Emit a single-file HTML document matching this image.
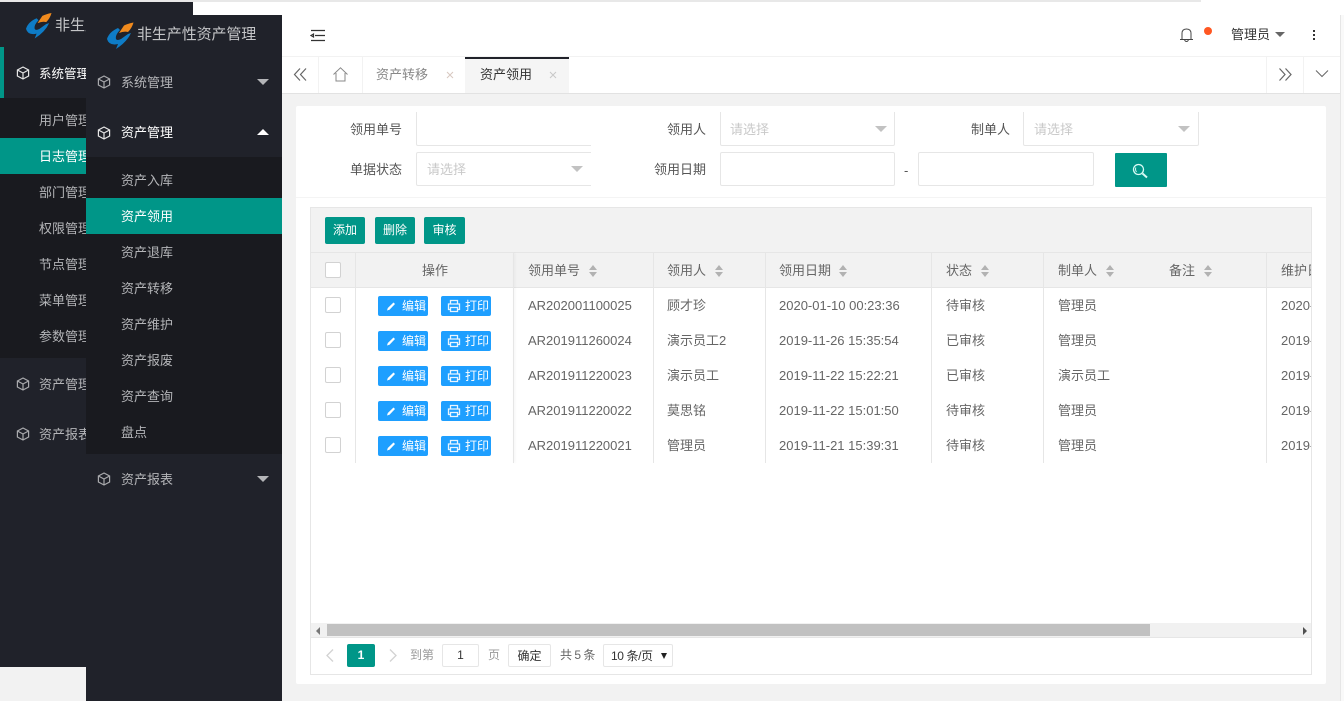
<!DOCTYPE html>
<html lang="zh-CN">
<head>
<meta charset="utf-8">
<title>资产领用</title>
<style>
html,body{margin:0;padding:0;width:1344px;height:701px;overflow:hidden;background:#fff;}
body{position:relative;font-family:"Liberation Sans","WenQuanYi Zen Hei","Noto Sans CJK SC",sans-serif;font-size:13px;color:#666;}
div,span,svg{position:absolute;box-sizing:border-box;}
.t{white-space:nowrap;line-height:18px;height:18px;margin-top:1px;}
.s{color:#b4b5b8;}
.w{color:#fff;}
.lbl{color:#555;width:90px;text-align:right;}
.ipt{background:#fff;border:1px solid #e6e6e6;border-radius:2px;}
.ph{color:#c9c9c9;}
.car{width:0;height:0;border-left:6px solid transparent;border-right:6px solid transparent;border-top:6px solid #c2c2c2;}
.carw{width:0;height:0;border-left:6px solid transparent;border-right:6px solid transparent;border-top:6px solid #b4b5b8;}
.g{background:#009688;color:#fff;border-radius:2px;text-align:center;font-size:12px;line-height:27px;height:27px;}
.vl{top:253px;height:210px;width:1px;background:#e6e6e6;}
.cb{left:325px;width:16px;height:16px;border:1px solid #d2d2d2;border-radius:2px;background:#fff;}
.b{background:#1e9fff;color:#fff;border-radius:2px;height:20px;width:50px;font-size:12px;line-height:20px;}
.b span{left:24px;top:0;white-space:nowrap;}
.b svg{left:6px;top:3px;}
.up{width:0;height:0;border-left:4px solid transparent;border-right:4px solid transparent;border-bottom:5px solid #b2b2b2;}
.dn{width:0;height:0;border-left:4px solid transparent;border-right:4px solid transparent;border-top:5px solid #b2b2b2;}
.h{color:#666;}
.clip{width:30px;height:20px;overflow:hidden;}
</style>
</head>
<body>
<svg width="0" height="0" style="left:0;top:0">
<defs>
<symbol id="cube" viewBox="0 0 14 14"><path d="M7 1 L12.6 4 V10 L7 13 L1.4 10 V4 Z M1.4 4 L7 7 L12.6 4 M7 7 V13" fill="none" stroke="currentColor" stroke-width="1.2"/></symbol>
<symbol id="logo" viewBox="0 0 27 27"><path d="M0 17 Q2 10 11 6 L13 8 Q8 13 9 17 Q10 19 14 17 L21 12 L24 11 Q20 20 9 27 L11 22 Q2 24 0 17Z" fill="#0e7cc6"/><path d="M12 11 L17 3.5 Q21 1.500 26.500 .5 Q25 6 21 10 Q17 9 12 11Z" fill="#f08a1d"/></symbol>
<symbol id="pen" viewBox="0 0 14 14"><path d="M3 11.500 L3.800 9 L9.500 3.500 L11 5 L5.500 10.700Z" fill="#fff"/></symbol>
<symbol id="prn" viewBox="0 0 14 14"><path d="M3.500 4.500 V1.500 H10.500 V4.500 M3.500 10.500 H1.500 V5 H12.500 V10.500 H10.500 M3.500 8.500 H10.500 V12.500 H3.500Z" fill="none" stroke="#e8f4ff" stroke-width="1.300"/></symbol>
</defs>
</svg>

<div style="left:0;top:0;width:1201px;height:2px;background:#e8e8e8"></div>
<div style="left:0;top:15px;width:1344px;height:686px;background:#f2f2f2"></div>
<div style="left:1340px;top:15px;width:4px;height:686px;background:#f9f9f9;border-left:1px solid #e6e6e6"></div>

<!-- back sidebar -->
<div style="left:0;top:2px;width:193px;height:665px;background:#20222a"></div>
<svg style="left:26px;top:12px" width="26" height="27"><use href="#logo"/></svg>
<div class="t" style="left:55px;top:16px;font-size:15px;color:#c4c5c7">非生产性资产管理</div>
<div style="left:0;top:47px;width:4px;height:51px;background:#009688"></div>
<svg style="left:16px;top:66px;color:#e6e6e6" width="14" height="14"><use href="#cube"/></svg>
<div class="t w" style="left:39px;top:64px;font-size:12.500px">系统管理</div>
<div style="left:0;top:98px;width:193px;height:260px;background:#191a1f"></div>
<div style="left:0;top:138px;width:193px;height:36px;background:#009688"></div>
<div class="t s" style="left:39px;top:111px">用户管理</div>
<div class="t w" style="left:39px;top:147px">日志管理</div>
<div class="t s" style="left:39px;top:183px">部门管理</div>
<div class="t s" style="left:39px;top:219px">权限管理</div>
<div class="t s" style="left:39px;top:255px">节点管理</div>
<div class="t s" style="left:39px;top:291px">菜单管理</div>
<div class="t s" style="left:39px;top:327px">参数管理</div>
<svg style="left:16px;top:377px;color:#a9aaad" width="14" height="14"><use href="#cube"/></svg>
<div class="t s" style="left:39px;top:375px">资产管理</div>
<svg style="left:16px;top:427px;color:#a9aaad" width="14" height="14"><use href="#cube"/></svg>
<div class="t s" style="left:39px;top:425px">资产报表</div>

<!-- front sidebar -->
<div style="left:86px;top:15px;width:196px;height:686px;background:#20222a"></div>
<svg style="left:107px;top:22px" width="27" height="27"><use href="#logo"/></svg>
<div class="t" style="left:137px;top:25px;font-size:15px;color:#c4c5c7;letter-spacing:-.1px">非生产性资产管理</div>
<svg style="left:97px;top:75px;color:#a9aaad" width="14" height="14"><use href="#cube"/></svg>
<div class="t s" style="left:121px;top:73px">系统管理</div>
<div class="carw" style="left:257px;top:79px"></div>
<svg style="left:97px;top:126px;color:#e6e6e6" width="14" height="14"><use href="#cube"/></svg>
<div class="t w" style="left:121px;top:123px">资产管理</div>
<div style="left:257px;top:129px;width:0;height:0;border-left:6px solid transparent;border-right:6px solid transparent;border-bottom:6px solid #fff"></div>
<div style="left:86px;top:157px;width:196px;height:297px;background:#191a1f"></div>
<div style="left:86px;top:198px;width:196px;height:36px;background:#009688"></div>
<div class="t s" style="left:121px;top:171px">资产入库</div>
<div class="t w" style="left:121px;top:207px">资产领用</div>
<div class="t s" style="left:121px;top:243px">资产退库</div>
<div class="t s" style="left:121px;top:279px">资产转移</div>
<div class="t s" style="left:121px;top:315px">资产维护</div>
<div class="t s" style="left:121px;top:351px">资产报废</div>
<div class="t s" style="left:121px;top:387px">资产查询</div>
<div class="t s" style="left:121px;top:423px">盘点</div>
<svg style="left:97px;top:472px;color:#a9aaad" width="14" height="14"><use href="#cube"/></svg>
<div class="t s" style="left:121px;top:470px">资产报表</div>
<div class="carw" style="left:257px;top:476px"></div>

<!-- header -->
<div style="left:282px;top:15px;width:1058px;height:42px;background:#fff;border-bottom:1px solid #f2f2f2"></div>
<svg style="left:310px;top:29px" width="16" height="13"><path d="M1 1.500H15M5 6.500H15M1 11.500H15M1 6.500L3.500 5V8Z" stroke="#333" stroke-width="1.200" fill="none"/></svg>
<svg style="left:1179px;top:27px" width="15" height="15"><path d="M1 12.500H14M3 12.500V6.500Q3 2 7.500 2Q12 2 12 6.500V12.500M5.500 12.500Q6 14.500 7.500 14.500Q9 14.500 9.500 12.500" fill="none" stroke="#444" stroke-width="1"/></svg>
<div style="left:1204px;top:27px;width:8px;height:8px;border-radius:50%;background:#ff5722"></div>
<div class="t" style="left:1231px;top:25px;font-size:13px;color:#333">管理员</div>
<div style="left:1275px;top:32px;width:0;height:0;border-left:5.500px solid transparent;border-right:5.500px solid transparent;border-top:5px solid #666"></div>
<div style="left:1313px;top:30px;width:2px;height:2px;background:#333"></div>
<div style="left:1313px;top:34px;width:2px;height:2px;background:#333"></div>
<div style="left:1313px;top:38px;width:2px;height:2px;background:#333"></div>

<!-- tabs -->
<div style="left:282px;top:57px;width:1058px;height:37px;background:#fff;border-bottom:1px solid #e2e2e2"></div>
<svg style="left:293px;top:67px" width="15" height="15"><path d="M7 1.500L1.500 7.500L7 13.500M13 1.500L7.500 7.500L13 13.500" fill="none" stroke="#666" stroke-width="1.200"/></svg>
<div style="left:318px;top:57px;width:1px;height:36px;background:#f2f2f2"></div>
<svg style="left:333px;top:67px" width="15" height="15"><path d="M.5 7.500L7.500 .8L14.500 7.500M3 6V14H12V6" fill="none" stroke="#888" stroke-width="1"/></svg>
<div style="left:362px;top:57px;width:1px;height:36px;background:#f2f2f2"></div>
<div class="t" style="left:376px;top:65px;font-size:13px;color:#888">资产转移</div>
<svg style="left:446px;top:71px" width="8" height="8"><path d="M1 1L7 7M7 1L1 7" stroke="#d8c8c0" stroke-width="1"/></svg>
<div style="left:465px;top:57px;width:104px;height:36px;background:#f5f5f5;border-top:2px solid #20222a"></div>
<div class="t" style="left:480px;top:65px;font-size:13px;color:#333">资产领用</div>
<svg style="left:549px;top:71px" width="8" height="8"><path d="M1 1L7 7M7 1L1 7" stroke="#c8c8c8" stroke-width="1"/></svg>
<div style="left:1266px;top:57px;width:1px;height:36px;background:#f2f2f2"></div>
<div style="left:1303px;top:57px;width:1px;height:36px;background:#f2f2f2"></div>
<svg style="left:1278px;top:67px" width="15" height="15"><path d="M1.500 1.500L7 7.500L1.500 13.500M7.500 1.500L13 7.500L7.500 13.500" fill="none" stroke="#666" stroke-width="1.200"/></svg>
<svg style="left:1315px;top:69px" width="14" height="10"><path d="M1 1.500L7 7.500L13 1.500" fill="none" stroke="#666" stroke-width="1"/></svg>

<!-- card -->
<div style="left:296px;top:106px;width:1030px;height:578px;background:#fff;border-radius:2px"></div>
<div style="left:296px;top:197px;width:1030px;height:1px;background:#f4f4f4"></div>

<!-- form -->
<div class="t lbl" style="left:312px;top:120px">领用单号</div>
<div style="left:416px;top:112px;width:175px;height:34px;overflow:hidden"><div class="ipt" style="left:0;top:-2px;width:190px;height:36px"></div></div>
<div class="t lbl" style="left:616px;top:120px">领用人</div>
<div style="left:720px;top:112px;width:175px;height:34px;overflow:hidden"><div class="ipt" style="left:0;top:-2px;width:175px;height:36px"></div></div>
<div class="t ph" style="left:730px;top:120px">请选择</div>
<div class="car" style="left:875px;top:126px"></div>
<div class="t lbl" style="left:920px;top:120px">制单人</div>
<div style="left:1023px;top:112px;width:176px;height:34px;overflow:hidden"><div class="ipt" style="left:0;top:-2px;width:176px;height:36px"></div></div>
<div class="t ph" style="left:1034px;top:120px">请选择</div>
<div class="car" style="left:1178px;top:126px"></div>

<div class="t lbl" style="left:312px;top:160px">单据状态</div>
<div style="left:416px;top:152px;width:175px;height:34px;overflow:hidden"><div class="ipt" style="left:0;top:0;width:190px;height:34px"></div></div>
<div class="t ph" style="left:427px;top:160px">请选择</div>
<div class="car" style="left:571px;top:166px"></div>
<div class="t lbl" style="left:616px;top:160px">领用日期</div>
<div class="ipt" style="left:720px;top:152px;width:175px;height:34px"></div>
<div class="t" style="left:904px;top:161px;color:#555">-</div>
<div class="ipt" style="left:918px;top:152px;width:176px;height:34px"></div>
<div style="left:1115px;top:153px;width:52px;height:34px;background:#009688;border-radius:1px"></div>
<svg style="left:1132px;top:163px" width="17" height="16"><circle cx="6.500" cy="6.500" r="5" fill="none" stroke="#d8fbf5" stroke-width="1.300"/><path d="M3.800 4.500Q3 7 4.500 9" fill="none" stroke="#d8fbf5" stroke-width="1"/><path d="M10.500 10.500L15 14.500" stroke="#d8fbf5" stroke-width="2"/></svg>

<!-- table -->
<div style="left:310px;top:207px;width:1002px;height:468px;border:1px solid #e6e6e6;background:#fff"></div>
<div style="left:311px;top:208px;width:1000px;height:45px;background:#f2f2f2;border-bottom:1px solid #e6e6e6"></div>
<div class="g" style="left:325px;top:217px;width:40px">添加</div>
<div class="g" style="left:375px;top:217px;width:40px">删除</div>
<div class="g" style="left:424px;top:217px;width:41px">审核</div>

<div style="left:311px;top:253px;width:1000px;height:35px;background:#f2f2f2;border-bottom:1px solid #e6e6e6"></div>
<div class="vl" style="left:355px"></div>
<div class="vl" style="left:513px;width:1px;background:#e6e6e6;box-shadow:1px 0 2px rgba(0,0,0,.07)"></div>
<div class="vl" style="left:653px"></div>
<div class="vl" style="left:765px"></div>
<div class="vl" style="left:931px"></div>
<div class="vl" style="left:1043px"></div>
<div class="vl" style="left:1266px"></div>

<div class="cb" style="top:262px"></div>
<div class="t h" style="left:422px;top:261px">操作</div>
<div class="t h" style="left:528px;top:261px">领用单号</div>
<div class="up" style="left:589px;top:265px"></div><div class="dn" style="left:589px;top:272px"></div>
<div class="t h" style="left:667px;top:261px">领用人</div>
<div class="up" style="left:715px;top:265px"></div><div class="dn" style="left:715px;top:272px"></div>
<div class="t h" style="left:779px;top:261px">领用日期</div>
<div class="up" style="left:839px;top:265px"></div><div class="dn" style="left:839px;top:272px"></div>
<div class="t h" style="left:946px;top:261px">状态</div>
<div class="up" style="left:981px;top:265px"></div><div class="dn" style="left:981px;top:272px"></div>
<div class="t h" style="left:1058px;top:261px">制单人</div>
<div class="up" style="left:1106px;top:265px"></div><div class="dn" style="left:1106px;top:272px"></div>
<div class="t h" style="left:1169px;top:261px">备注</div>
<div class="up" style="left:1204px;top:265px"></div><div class="dn" style="left:1204px;top:272px"></div>
<div class="clip" style="left:1281px;top:261px"><div class="t h" style="left:0;top:0">维护日期</div></div>

<!-- row 1 -->
<div class="cb" style="top:297px"></div>
<div class="b" style="left:378px;top:296px"><svg width="14" height="14"><use href="#pen"/></svg><span>编辑</span></div>
<div class="b" style="left:441px;top:296px"><svg width="14" height="14"><use href="#prn"/></svg><span>打印</span></div>
<div class="t" style="left:528px;top:296px">AR202001100025</div>
<div class="t" style="left:667px;top:296px">顾才珍</div>
<div class="t" style="left:779px;top:296px">2020-01-10 00:23:36</div>
<div class="t" style="left:946px;top:296px">待审核</div>
<div class="t" style="left:1058px;top:296px">管理员</div>
<div class="clip" style="left:1281px;top:296px"><div class="t" style="left:0;top:0">2020-01-10</div></div>

<!-- row 2 -->
<div class="cb" style="top:332px"></div>
<div class="b" style="left:378px;top:331px"><svg width="14" height="14"><use href="#pen"/></svg><span>编辑</span></div>
<div class="b" style="left:441px;top:331px"><svg width="14" height="14"><use href="#prn"/></svg><span>打印</span></div>
<div class="t" style="left:528px;top:331px">AR201911260024</div>
<div class="t" style="left:667px;top:331px">演示员工2</div>
<div class="t" style="left:779px;top:331px">2019-11-26 15:35:54</div>
<div class="t" style="left:946px;top:331px">已审核</div>
<div class="t" style="left:1058px;top:331px">管理员</div>
<div class="clip" style="left:1281px;top:331px"><div class="t" style="left:0;top:0">2019-11-26</div></div>

<!-- row 3 -->
<div class="cb" style="top:367px"></div>
<div class="b" style="left:378px;top:366px"><svg width="14" height="14"><use href="#pen"/></svg><span>编辑</span></div>
<div class="b" style="left:441px;top:366px"><svg width="14" height="14"><use href="#prn"/></svg><span>打印</span></div>
<div class="t" style="left:528px;top:366px">AR201911220023</div>
<div class="t" style="left:667px;top:366px">演示员工</div>
<div class="t" style="left:779px;top:366px">2019-11-22 15:22:21</div>
<div class="t" style="left:946px;top:366px">已审核</div>
<div class="t" style="left:1058px;top:366px">演示员工</div>
<div class="clip" style="left:1281px;top:366px"><div class="t" style="left:0;top:0">2019-11-22</div></div>

<!-- row 4 -->
<div class="cb" style="top:402px"></div>
<div class="b" style="left:378px;top:401px"><svg width="14" height="14"><use href="#pen"/></svg><span>编辑</span></div>
<div class="b" style="left:441px;top:401px"><svg width="14" height="14"><use href="#prn"/></svg><span>打印</span></div>
<div class="t" style="left:528px;top:401px">AR201911220022</div>
<div class="t" style="left:667px;top:401px">莫思铭</div>
<div class="t" style="left:779px;top:401px">2019-11-22 15:01:50</div>
<div class="t" style="left:946px;top:401px">待审核</div>
<div class="t" style="left:1058px;top:401px">管理员</div>
<div class="clip" style="left:1281px;top:401px"><div class="t" style="left:0;top:0">2019-11-22</div></div>

<!-- row 5 -->
<div class="cb" style="top:437px"></div>
<div class="b" style="left:378px;top:436px"><svg width="14" height="14"><use href="#pen"/></svg><span>编辑</span></div>
<div class="b" style="left:441px;top:436px"><svg width="14" height="14"><use href="#prn"/></svg><span>打印</span></div>
<div class="t" style="left:528px;top:436px">AR201911220021</div>
<div class="t" style="left:667px;top:436px">管理员</div>
<div class="t" style="left:779px;top:436px">2019-11-21 15:39:31</div>
<div class="t" style="left:946px;top:436px">待审核</div>
<div class="t" style="left:1058px;top:436px">管理员</div>
<div class="clip" style="left:1281px;top:436px"><div class="t" style="left:0;top:0">2019-11-21</div></div>

<!-- scrollbar -->
<div style="left:311px;top:623px;width:1000px;height:15px;background:#f1f1f1;border-bottom:1px solid #e6e6e6"></div>
<div style="left:327px;top:624px;width:823px;height:12px;background:#c1c1c1"></div>
<div style="left:316px;top:627px;width:0;height:0;border-top:4px solid transparent;border-bottom:4px solid transparent;border-right:4px solid #777"></div>
<div style="left:1303px;top:627px;width:0;height:0;border-top:4px solid transparent;border-bottom:4px solid transparent;border-left:4px solid #505050"></div>

<!-- pagination -->
<svg style="left:325px;top:648px" width="10" height="15"><path d="M8 1.500L2 7.500L8 13.500" fill="none" stroke="#d2d2d2" stroke-width="1.300"/></svg>
<div style="left:347px;top:644px;width:28px;height:23px;background:#009688;color:#fff;border-radius:2px;font-size:12px;font-weight:bold;text-align:center;line-height:23px">1</div>
<svg style="left:388px;top:648px" width="10" height="15"><path d="M2 1.500L8 7.500L2 13.500" fill="none" stroke="#d2d2d2" stroke-width="1.300"/></svg>
<div class="t" style="left:410px;top:645px;font-size:12px;color:#999">到第</div>
<div class="ipt" style="left:442px;top:644px;width:37px;height:23px;text-align:center;line-height:21px;font-size:12px;color:#333">1</div>
<div class="t" style="left:488px;top:645px;font-size:12px;color:#999">页</div>
<div class="ipt" style="left:508px;top:644px;width:43px;height:23px;text-align:center;line-height:22px;font-size:12px;color:#333">确定</div>
<div class="t" style="left:560px;top:645px;font-size:12px;color:#666;letter-spacing:-.5px">共 5 条</div>
<div class="ipt" style="left:603px;top:644px;width:70px;height:23px;line-height:22px;font-size:12px;color:#333;padding-left:7px;white-space:nowrap;letter-spacing:-.4px">10 条/页</div>
<div style="left:661px;top:653px;width:0;height:0;border-left:3.500px solid transparent;border-right:3.500px solid transparent;border-top:6px solid #222"></div>
</body>
</html>
